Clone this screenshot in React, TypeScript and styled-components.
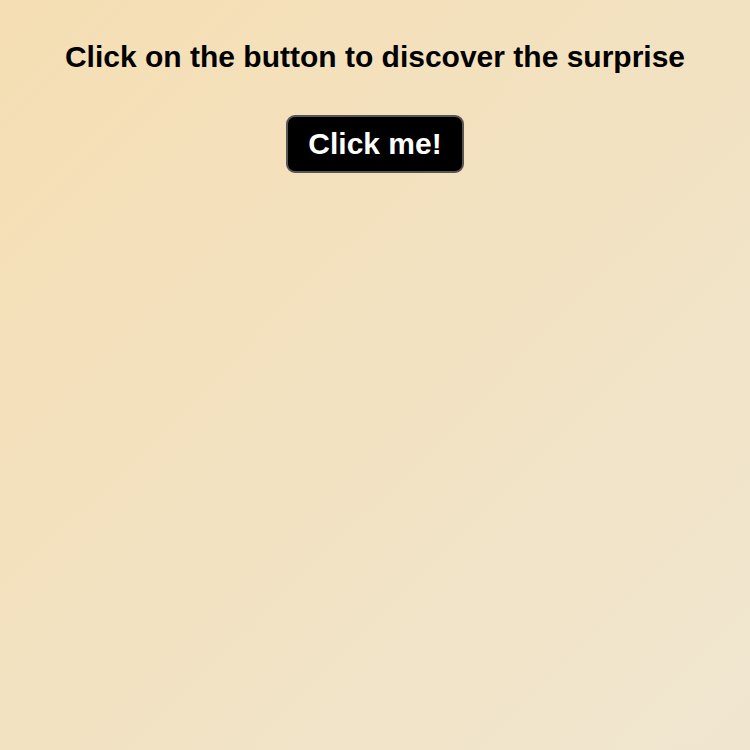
import React from "react";
import styled, { createGlobalStyle } from "styled-components";

const Global = createGlobalStyle`
  html, body { margin: 0; padding: 0; }
  body {
    min-height: 750px;
    background: linear-gradient(135deg, #f5deb3 0%, #f0e6d0 100%);
    font-family: "Liberation Sans", Arial, sans-serif;
  }
`;

const Page = styled.main`
  display: flex;
  flex-direction: column;
  align-items: center;
  padding-top: 40px;
  min-height: 750px;
  box-sizing: border-box;
`;

const Heading = styled.h1`
  margin: 0;
  font-size: 30px;
  font-weight: 700;
  color: #000;
  line-height: 34px;
`;

const Button = styled.button`
  margin-top: 41px;
  background: #000;
  color: #fff;
  font-family: "Liberation Sans", Arial, sans-serif;
  font-size: 30px;
  font-weight: 700;
  padding: 0 20px;
  height: 58px;
  border: 2px solid #5a5550;
  border-radius: 9px;
  cursor: pointer;
`;

export default function App() {
  return (
    <>
      <Global />
      <Page>
        <Heading>Click on the button to discover the surprise</Heading>
        <Button>Click me!</Button>
      </Page>
    </>
  );
}
